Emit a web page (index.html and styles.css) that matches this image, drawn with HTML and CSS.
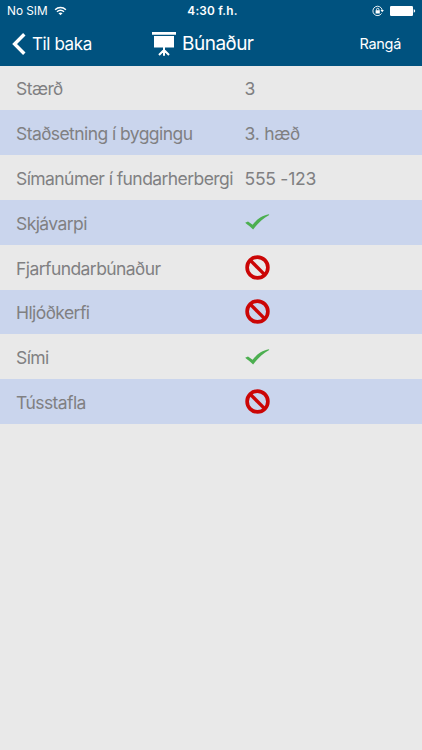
FILE: index.html
```html
<!DOCTYPE html>
<html lang="is">
  <head>
    <meta charset="UTF-8" />
    <meta name="viewport" content="width=device-width, initial-scale=1.0" />
    <title>Búnaður</title>
    <link rel="stylesheet" href="styles.css">
  </head>
  <body>
    <svg class="symbols">
      <symbol id="check" viewBox="0 0 26 18">
        <path d="M0.2 9.8 L3 8.6 L7.6 11.8 C12 6.2 17 2.4 24 1.3 L24.2 2 C18.4 5.3 12.9 10 8.1 16.5 C5.8 14 3 12 0.2 9.8 Z" fill="#4caf50" />
      </symbol>
      <symbol id="ban" viewBox="0 0 26 26">
        <circle cx="13" cy="13" r="10.8" fill="none" stroke="#cb0606" stroke-width="3.8" />
        <path d="M5.6 5.6 L20.4 20.4" stroke="#cb0606" stroke-width="3.5" />
      </symbol>
    </svg>
    <div class="header">
      <div class="status">
        <div class="carrier">
          <span>No SIM</span>
          <svg class="wifi" viewBox="0 0 14 10">
            <path d="M1.2 3.6 C4.6 0.4 9.4 0.4 12.8 3.6" />
            <path d="M3.2 5.8 C5.5 3.8 8.5 3.8 10.8 5.8" />
            <path class="dot" d="M4.8 7.4 C6.1 6.3 7.9 6.3 9.2 7.4 L7 9.7 Z" />
          </svg>
        </div>
        <div class="time">4:30 f.h.</div>
        <div class="power">
          <svg class="lock" viewBox="0 0 12 12">
            <path d="M9.6 8.4 A4.7 4.7 0 1 1 10.2 5" />
            <path class="fill" d="M8.5 5 H11.9 L10.2 7.2 Z M3.6 5.3 H7.8 V8.5 H3.6 Z" />
            <path d="M4.5 5.5 V4.5 A1.2 1.2 0 0 1 6.9 4.5 V5.5" />
          </svg>
          <svg class="battery" viewBox="0 0 26 10">
            <rect x="0" y="0" width="23" height="10" rx="1.3" />
            <path d="M23.7 3.3 Q25.2 3.6 25.2 5 Q25.2 6.4 23.7 6.7 Z" />
          </svg>
        </div>
      </div>
      <div class="nav">
        <div class="back">
          <svg class="arrow" viewBox="0 0 14 22">
            <path d="M12.3 1.2 L2.6 11 L12.3 20.8" />
          </svg>
          <span>Til baka</span>
        </div>
        <div class="title">
          <svg class="board" viewBox="0 0 24 26">
            <path d="M0 1 H24 V3.8 H0 Z M2 5 H22 V16.5 H2 Z M11 16 H13 V19 H11 Z" />
            <path class="legs" d="M12 18 V24.8 M12 19 L7 24 M12 19 L17 24" />
          </svg>
          <span>Búnaður</span>
        </div>
        <div class="room">Rangá</div>
      </div>
    </div>
    <ul class="list">
      <li><span class="label">Stærð</span><span class="value">3</span></li>
      <li><span class="label">Staðsetning í byggingu</span><span class="value">3. hæð</span></li>
      <li><span class="label">Símanúmer í fundarherbergi</span><span class="value">555 -123</span></li>
      <li><span class="label">Skjávarpi</span><svg class="check"><use href="#check" /></svg></li>
      <li><span class="label">Fjarfundarbúnaður</span><svg class="ban"><use href="#ban" /></svg></li>
      <li><span class="label">Hljóðkerfi</span><svg class="ban"><use href="#ban" /></svg></li>
      <li><span class="label">Sími</span><svg class="check"><use href="#check" /></svg></li>
      <li><span class="label">Tússtafla</span><svg class="ban"><use href="#ban" /></svg></li>
    </ul>
  </body>
</html>
```
FILE: styles.css
```css
* {
  margin: 0;
  padding: 0;
  box-sizing: border-box;
  list-style: none;
}
body {
  min-height: 750px;
  background: #e9e9e9;
  color: #808082;
  font-family: Inter, "Liberation Sans", sans-serif;
  font-size: 17.5px;
  white-space: nowrap;
}
svg {
  display: block;
  flex: none;
}
.symbols {
  display: none;
}
.header {
  height: 65.6px;
  background: #00527f;
  color: #fff;
}
.status {
  display: grid;
  grid-template-columns: 1fr auto 1fr;
  align-items: center;
  height: 22px;
  padding: 0 6px 0 7px;
  font-size: 11.8px;
}
.carrier,
.power {
  display: flex;
  align-items: center;
}
.carrier {
  gap: 6px;
}
.power {
  justify-content: flex-end;
  gap: 6px;
}
.time {
  padding-left: 2px;
  font-weight: 600;
  letter-spacing: 0.2px;
}
.wifi {
  width: 13px;
  height: 10px;
  fill: none;
  stroke: #fff;
  stroke-width: 1.6;
}
.wifi .dot,
.lock .fill {
  fill: #fff;
  stroke: none;
}
.lock {
  width: 12px;
  height: 12px;
  fill: none;
  stroke: #fff;
  stroke-width: 0.9;
}
.battery {
  width: 26px;
  height: 10px;
  fill: #fff;
}
.nav {
  display: grid;
  grid-template-columns: 140px 1fr auto;
  align-items: center;
  height: 43px;
  padding: 0 21px 0 12px;
}
.back,
.title {
  display: flex;
  align-items: center;
}
.back {
  gap: 6px;
  font-size: 17px;
  letter-spacing: -0.4px;
}
.arrow {
  width: 14px;
  height: 22px;
  fill: none;
  stroke: #fff;
  stroke-width: 3.4;
}
.title {
  gap: 6px;
  font-size: 19px;
  letter-spacing: -0.5px;
}
.board {
  width: 24px;
  height: 26px;
  fill: #fff;
}
.board .legs {
  fill: none;
  stroke: #fff;
  stroke-width: 2;
}
.room {
  font-size: 14.5px;
  letter-spacing: -0.3px;
}
.list li {
  display: grid;
  grid-template-columns: 228.5px 1fr;
  align-items: center;
  height: 44.8px;
  padding-left: 16px;
}
.list li:nth-child(even) {
  background: #cad5ed;
}
.label,
.value {
  padding-top: 2px;
}
.label {
  letter-spacing: -0.57px;
}
.value {
  letter-spacing: -0.25px;
}
.check {
  width: 26px;
  height: 18px;
}
.ban {
  width: 25px;
  height: 25px;
}
```
